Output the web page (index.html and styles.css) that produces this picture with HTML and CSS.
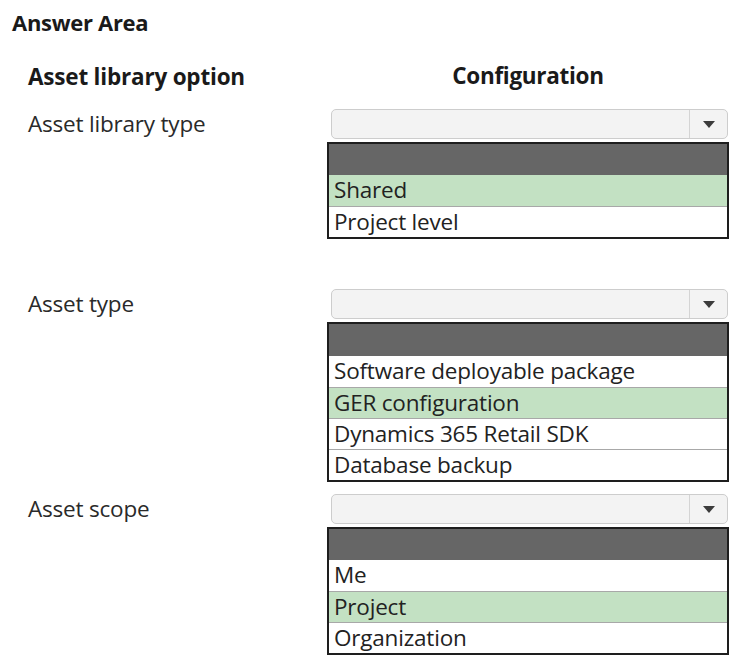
FILE: index.html
```html
<!DOCTYPE html>
<html>
<head>
<meta charset="utf-8">
<link rel="stylesheet" href="styles.css">
</head>
<body>
<div class="page">
  <div class="title">Answer Area</div>
  <div class="table">
    <div class="row head">
      <div class="label">Asset library option</div>
      <div class="config config-head">Configuration</div>
    </div>

    <div class="section gap-large">
      <div class="row">
        <div class="label">Asset library type</div>
        <div class="config">
          <div class="select"><span class="select-value"></span><span class="select-arrow"><svg width="12" height="7" viewBox="0 0 12 7"><path d="M0 0H12L6 7Z" fill="#3c3c3c"/></svg></span></div>
          <div class="list">
            <div class="list-head"></div>
            <div class="item sel">Shared</div>
            <div class="item">Project level</div>
          </div>
        </div>
      </div>
    </div>

    <div class="section gap-small">
      <div class="row">
        <div class="label">Asset type</div>
        <div class="config">
          <div class="select"><span class="select-value"></span><span class="select-arrow"><svg width="12" height="7" viewBox="0 0 12 7"><path d="M0 0H12L6 7Z" fill="#3c3c3c"/></svg></span></div>
          <div class="list">
            <div class="list-head tall"></div>
            <div class="item">Software deployable package</div>
            <div class="item sel">GER configuration</div>
            <div class="item">Dynamics 365 Retail SDK</div>
            <div class="item">Database backup</div>
          </div>
        </div>
      </div>
    </div>

    <div class="section">
      <div class="row">
        <div class="label">Asset scope</div>
        <div class="config">
          <div class="select"><span class="select-value"></span><span class="select-arrow"><svg width="12" height="7" viewBox="0 0 12 7"><path d="M0 0H12L6 7Z" fill="#3c3c3c"/></svg></span></div>
          <div class="list">
            <div class="list-head"></div>
            <div class="item">Me</div>
            <div class="item sel">Project</div>
            <div class="item">Organization</div>
          </div>
        </div>
      </div>
    </div>
  </div>
</div>
</body>
</html>
```

FILE: styles.css
```css
html, body {
  margin: 0;
  padding: 0;
  background: #ffffff;
}
body {
  font-family: "Open Sans", "Noto Sans", "Liberation Sans", sans-serif;
  font-size: 22.5px;
  color: #2a2a2a;
}
.page {
  padding: 8px 0 0 12px;
}
.title {
  font-weight: 700;
  font-size: 22px;
  line-height: 28px;
  color: #1a1a1a;
  letter-spacing: -0.3px;
}
.table {
  margin-left: 16px;
  margin-top: 26px;
}
.row {
  display: grid;
  grid-template-columns: 299px 402px;
  align-items: start;
}
.head {
  font-weight: 700;
  color: #1a1a1a;
  line-height: 28px;
  letter-spacing: -0.3px;
}
.config-head {
  text-align: center;
}
.label {
  line-height: 30px;
  letter-spacing: -0.2px;
}
.head + .section {
  margin-top: 17px;
}
.gap-large {
  margin-bottom: 50px;
}
.gap-small {
  margin-bottom: 12px;
}
.select {
  display: flex;
  height: 28px;
  margin: 0 1px 0 4px;
  border: 1px solid #cdcdcd;
  border-radius: 5px;
  background: #f3f3f3;
}
.select-value {
  flex: 1;
}
.select-arrow {
  width: 37px;
  border-left: 1px solid #d4d4d4;
  display: flex;
  align-items: center;
  justify-content: center;
}
.list {
  margin-top: 3px;
  border: 2px solid #1e1e1e;
  background: #ffffff;
}
.list-head {
  height: 31px;
  background: #666666;
}
.list-head.tall {
  height: 32px;
}
.item {
  height: 30px;
  line-height: 30px;
  border-top: 1px solid #a8a8a8;
  padding-left: 5px;
  color: #222;
  letter-spacing: -0.2px;
  white-space: nowrap;
}
.list-head + .item {
  border-top: none;
  height: 31px;
}
.item.sel {
  background: #c3e1c3;
}
```
